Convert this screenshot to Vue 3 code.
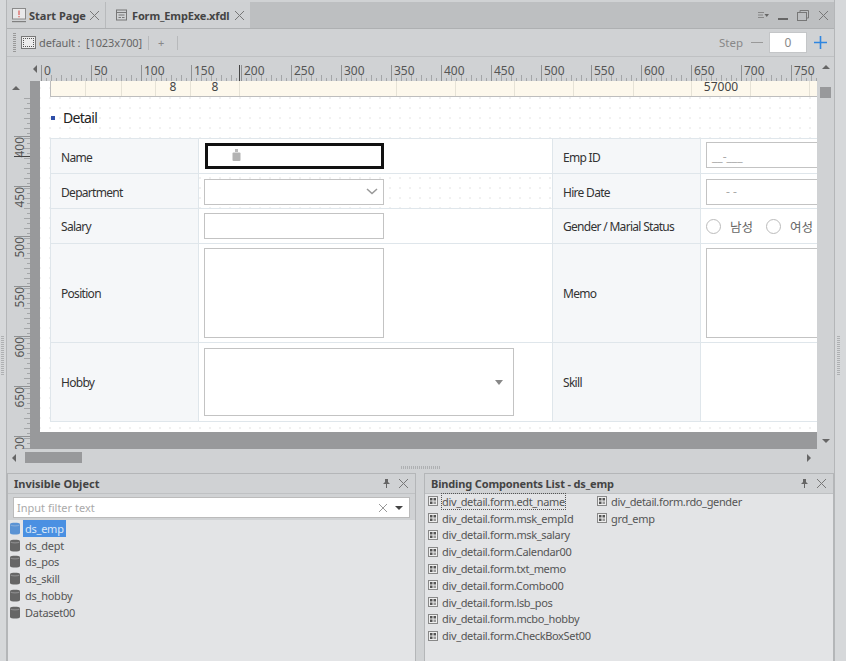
<script setup>
const topLabels = Array.from({ length: 16 }, (_, i) => i * 50)
const leftLabels = [400, 450, 500, 550, 600, 650, 700]

const bandCells = [
  '', '', '', '8', '8', '', '', '', '', '', '', '57000', '', '',
]

const datasets = ['ds_emp', 'ds_dept', 'ds_pos', 'ds_skill', 'ds_hobby', 'Dataset00']

const bindings = [
  'div_detail.form.edt_name',
  'div_detail.form.msk_empId',
  'div_detail.form.msk_salary',
  'div_detail.form.Calendar00',
  'div_detail.form.txt_memo',
  'div_detail.form.Combo00',
  'div_detail.form.lsb_pos',
  'div_detail.form.mcbo_hobby',
  'div_detail.form.CheckBoxSet00',
  'div_detail.form.rdo_gender',
  'grd_emp',
]
</script>

<template>
  <div class="ide">
    <div class="gutter gutter-left"><div class="grip-v"></div></div>

    <div class="main">
      <div class="tabbar">
        <div class="tab tab-start">
          <svg class="tab-icon" width="14" height="15" viewBox="0 0 14 15">
            <rect x="0.5" y="0.5" width="13" height="10.5" fill="#e9e9ea" stroke="#8a8a8a" />
            <rect x="6.4" y="2.5" width="1.2" height="4.5" fill="#dd5a55" />
            <rect x="6.4" y="8" width="1.2" height="1.3" fill="#dd5a55" />
            <rect x="0" y="13" width="14" height="1.2" fill="#808080" />
          </svg>
          <span class="tab-title">Start Page</span>
          <svg class="x-icon" width="11" height="11" viewBox="0 0 11 11"><path d="M1 1 10 10M10 1 1 10" /></svg>
        </div>
        <div class="tab tab-form">
          <svg class="tab-icon" width="11" height="12" viewBox="0 0 11 12">
            <rect x="0.5" y="1" width="10" height="10" fill="none" stroke="#777" />
            <path d="M0.5 3.5H10.5M2.5 6H8.5M2.5 8.5H5M6 8.5H8.5" stroke="#777" fill="none" />
          </svg>
          <span class="tab-title">Form_EmpExe.xfdl</span>
          <svg class="x-icon" width="11" height="11" viewBox="0 0 11 11"><path d="M1 1 10 10M10 1 1 10" /></svg>
        </div>
        <div class="win-actions">
          <svg width="11" height="7" viewBox="0 0 11 7">
            <path d="M0 .5H6M0 3H5M0 5.5H6" stroke="#888" fill="none" />
            <path d="M6.5 2H11L8.75 5Z" fill="#666" />
          </svg>
          <span class="win-min"></span>
          <svg width="12" height="11" viewBox="0 0 12 11">
            <path d="M3 2.5V.5H11.5V8H9.5" fill="none" stroke="#777" />
            <rect x="0.5" y="2.5" width="9" height="8" fill="none" stroke="#777" />
          </svg>
          <svg class="x-icon" width="11" height="11" viewBox="0 0 11 11"><path d="M1 1 10 10M10 1 1 10" /></svg>
        </div>
      </div>

      <div class="toolbar">
        <span class="grip-tool"></span>
        <span class="screen-icon"><span></span></span>
        <span class="screen-name">default :&nbsp; [1023x700]</span>
        <span class="tool-sep"></span>
        <span class="tool-plus">+</span>
        <span class="tool-sep"></span>
        <span class="step-label">Step</span>
        <span class="step-minus"></span>
        <span class="step-box">0</span>
        <svg class="step-plus" width="13" height="13" viewBox="0 0 13 13"><path d="M6.5 0V13M0 6.5H13" stroke="#2f86e0" stroke-width="1.6" fill="none" /></svg>
      </div>

      <div class="ruler-row">
        <div class="ruler-corner"><span class="tri-left"></span></div>
        <div class="ruler-top">
          <div v-for="n in topLabels" :key="n" class="ruler-cell">{{ n }}</div>
          <span class="ruler-mark"></span>
        </div>
        <div class="vscroll-head"><span class="tri-up"></span></div>
      </div>

      <div class="designer">
        <div class="ruler-left">
          <div class="ruler-arrow"><span class="tri-up"></span></div>
          <div class="ruler-left-track">
            <div v-for="n in leftLabels" :key="n" class="ruler-left-cell"><span>{{ n }}</span></div>
            <span class="ruler-left-mark"></span>
          </div>
        </div>

        <div class="stage">
          <div class="canvas">
            <div class="band">
              <div v-for="(text, i) in bandCells" :key="i" class="band-cell">{{ text }}</div>
            </div>

            <div class="section-title"><i></i>Detail</div>

            <div class="form-grid">
              <div class="th th-low">Name</div>
              <div class="td">
                <div class="field field-active">
                  <svg width="9" height="12" viewBox="0 0 9 12">
                    <rect x="3" y="0" width="3" height="3" fill="#bbb" />
                    <rect x="0.5" y="3.5" width="8" height="8.5" rx="1" fill="#b3b3b3" />
                  </svg>
                </div>
              </div>
              <div class="th th-low">Emp ID</div>
              <div class="td"><div class="field field-mask">__-___</div></div>

              <div class="th th-low">Department</div>
              <div class="td td-open">
                <div class="field field-combo">
                  <svg width="12" height="7" viewBox="0 0 12 7"><path d="M1 1 6 5.5 11 1" fill="none" stroke="#999" stroke-width="1.5" /></svg>
                </div>
              </div>
              <div class="th th-low">Hire Date</div>
              <div class="td"><div class="field field-date">- -</div></div>

              <div class="th">Salary</div>
              <div class="td"><div class="field"></div></div>
              <div class="th">Gender / Marial Status</div>
              <div class="td td-radio">
                <span class="radio"></span><span class="radio-text">남성</span>
                <span class="radio"></span><span class="radio-text">여성</span>
              </div>

              <div class="th">Position</div>
              <div class="td"><div class="field field-area"></div></div>
              <div class="th">Memo</div>
              <div class="td"><div class="field field-area"></div></div>

              <div class="th">Hobby</div>
              <div class="td">
                <div class="field field-hobby"><span class="tri-down"></span></div>
              </div>
              <div class="th">Skill</div>
              <div class="td"></div>
            </div>
          </div>
        </div>

        <div class="vscroll">
          <span class="vthumb"></span>
          <span class="tri-down small"></span>
        </div>
      </div>

      <div class="hscroll">
        <span class="tri-left"></span>
        <span class="hthumb"></span>
        <span class="tri-right"></span>
      </div>

      <div class="hsplit"><span class="grip-h"></span></div>

      <div class="panels">
        <section class="panel panel-left">
          <header class="panel-head">
            <span>Invisible Object</span>
            <svg class="pin" width="7" height="9" viewBox="0 0 7 9"><path d="M2 0H5V3L7 5H4V9H3V5H0L2 3Z" fill="#666" /></svg>
            <svg class="x-icon" width="11" height="11" viewBox="0 0 11 11"><path d="M1 1 10 10M10 1 1 10" /></svg>
          </header>
          <div class="filter-wrap">
            <div class="filter">
              <span class="filter-text">Input filter text</span>
              <svg class="x-icon light" width="10" height="10" viewBox="0 0 10 10"><path d="M1 1 9 9M9 1 1 9" /></svg>
              <span class="tri-down dark"></span>
            </div>
          </div>
          <ul class="ds-list">
            <li v-for="(name, i) in datasets" :key="name" class="ds-item" :class="{ selected: i === 0 }">
              <svg width="10" height="13" viewBox="0 0 10 13">
                <path d="M0 2C0 .2 10 .2 10 2V11C10 13 0 13 0 11Z" />
                <path d="M.5 3C2 4.2 8 4.2 9.5 3" fill="none" stroke="#e3e4e6" stroke-width=".6" opacity=".6" />
              </svg>
              <span class="ds-name">{{ name }}</span>
            </li>
          </ul>
        </section>

        <section class="panel panel-right">
          <header class="panel-head">
            <span class="bind-title">Binding Components List - ds_emp</span>
            <svg class="pin" width="7" height="9" viewBox="0 0 7 9"><path d="M2 0H5V3L7 5H4V9H3V5H0L2 3Z" fill="#666" /></svg>
            <svg class="x-icon" width="11" height="11" viewBox="0 0 11 11"><path d="M1 1 10 10M10 1 1 10" /></svg>
          </header>
          <ul class="bind-list">
            <li v-for="(name, i) in bindings" :key="name" class="bind-item">
              <svg width="10" height="10" viewBox="0 0 10 10">
                <rect x="0.5" y="0.5" width="9" height="9" fill="#eee" stroke="#888" />
                <rect x="2" y="2" width="2.5" height="2.5" fill="#555" />
                <rect x="5.5" y="2" width="2.5" height="2.5" fill="#555" />
                <rect x="2" y="5.5" width="2.5" height="2.5" fill="#555" />
                <rect x="5.5" y="5.5" width="2.5" height="2.5" fill="#999" />
              </svg>
              <span class="bind-name" :class="{ focused: i === 0 }">{{ name }}</span>
            </li>
          </ul>
        </section>
      </div>
    </div>

    <div class="gutter gutter-right">
      <div class="grip-v"></div>
    </div>
  </div>
</template>

<style>
html,
body {
  margin: 0;
  background: #d0d2d4;
}
</style>

<style scoped>
.ide {
  display: flex;
  width: 846px;
  height: 661px;
  overflow: hidden;
  background: #d0d2d4;
  font-family: "Noto Sans", "Noto Sans CJK KR", sans-serif;
  color: #444;
}

.gutter {
  flex: none;
  background: #d6d8da;
}

.gutter-left {
  border-right: 1px solid #b4b6b8;
  box-sizing: border-box;
  width: 7px;
}

.gutter-right {
  width: 12px;
  border-left: 1px solid #b4b6b8;
  box-sizing: border-box;
}

.grip-v {
  width: 3px;
  height: 40px;
  margin: 335px 0 0 1px;
  background: repeating-linear-gradient(0deg, #aeb0b2 0 1px, transparent 1px 2px);
}

.gutter-right .grip-v {
  margin-left: 2px;
}

.main {
  display: flex;
  flex-direction: column;
  width: 827px;
  flex: none;
}

/* tabs */
.tabbar {
  display: flex;
  align-items: stretch;
  height: 27px;
  margin-top: 2px;
  background: #bdbfc1;
  border-bottom: 1px solid #aeb0b2;
  box-sizing: border-box;
}

.tab {
  display: flex;
  align-items: center;
  background: #cfd1d3;
  font-size: 11px;
  font-weight: 700;
  color: #444;
}

.tab-start {
  width: 99px;
  padding-left: 5px;
  box-sizing: border-box;
  gap: 3px;
  border-right: 1px solid #b8babc;
}

.tab-form {
  width: 144px;
  padding-left: 10px;
  box-sizing: border-box;
  gap: 5px;
}

.tab-form .tab-title {
  letter-spacing: -0.15px;
}

.tab-title {
  white-space: nowrap;
}

.x-icon {
  flex: none;
}

.x-icon path {
  fill: none;
  stroke: #777;
  stroke-width: 1;
}

.x-icon.light path {
  stroke: #999;
}

.win-actions {
  display: flex;
  align-items: center;
  gap: 9px;
  margin-left: auto;
  padding-right: 5px;
}

.win-min {
  width: 10px;
  height: 2px;
  margin-top: 8px;
  background: #666;
}

/* toolbar */
.toolbar {
  display: flex;
  align-items: center;
  height: 28px;
  padding-left: 6px;
  font-size: 11px;
  color: #666;
  border-bottom: 1px solid #bfc1c3;
  box-sizing: border-box;
}

.grip-tool {
  width: 3px;
  height: 19px;
  background: repeating-linear-gradient(0deg, #999 0 1px, transparent 1px 2px);
}

.screen-icon {
  display: flex;
  width: 15px;
  height: 13px;
  margin-left: 5px;
  border: 1px solid #777;
  background: #ececec;
  box-sizing: border-box;
  padding: 1px;
}

.screen-icon span {
  flex: 1;
  border: 1px dotted #555;
}

.screen-name {
  margin-left: 3px;
  white-space: nowrap;
  letter-spacing: -0.1px;
}

.tool-sep {
  width: 1px;
  height: 14px;
  margin-left: 6px;
  background: #b7b9bb;
}

.tool-plus {
  margin-left: 9px;
  margin-right: 7px;
  color: #888;
}

.step-label {
  margin-left: auto;
  color: #888;
  font-size: 11.5px;
}

.step-minus {
  width: 12px;
  height: 1px;
  margin-left: 8px;
  background: #999;
}

.step-box {
  width: 38px;
  height: 21px;
  margin-left: 6px;
  background: #fff;
  border: 1px solid #c4c6c8;
  box-sizing: border-box;
  text-align: center;
  line-height: 19px;
  color: #888;
  font-size: 12px;
}

.step-plus {
  margin-left: 7px;
  margin-right: 7px;
}

/* rulers */
.ruler-row {
  display: flex;
  height: 24px;
}

.ruler-corner {
  position: relative;
  width: 33px;
  flex: none;
}

.ruler-corner .tri-left {
  position: absolute;
  left: 26px;
  top: 8px;
}

.ruler-top {
  position: relative;
  display: flex;
  align-items: flex-end;
  width: 777px;
  flex: none;
  padding-left: 1px;
  box-sizing: border-box;
  overflow: hidden;
  background:
    repeating-linear-gradient(90deg, #a4a6a8 0 1px, transparent 1px 5px) left 1px bottom 0 / 100% 3px no-repeat,
    repeating-linear-gradient(90deg, #a4a6a8 0 1px, transparent 1px 10px) left 1px bottom 0 / 100% 6px no-repeat;
}

.ruler-cell {
  flex: none;
  width: 50px;
  height: 16px;
  box-sizing: border-box;
  padding-left: 2px;
  border-left: 1px solid #8f9193;
  font-size: 12px;
  line-height: 12px;
  color: #555;
}

.ruler-mark {
  position: absolute;
  left: 199px;
  bottom: 0;
  width: 1px;
  height: 16px;
  background: #444;
}

.vscroll-head {
  display: flex;
  justify-content: center;
  flex: 1;
  padding-top: 8px;
}

.designer {
  display: flex;
  height: 368px;
}

.ruler-left {
  display: flex;
  flex-direction: column;
  width: 23px;
  flex: none;
}

.ruler-arrow {
  display: flex;
  justify-content: center;
  height: 16px;
  padding-top: 5px;
  padding-right: 6px;
  box-sizing: border-box;
}

.ruler-left-track {
  position: relative;
  flex: 1;
  padding-top: 39px;
  overflow: hidden;
  background:
    repeating-linear-gradient(0deg, #a4a6a8 0 1px, transparent 1px 5px) right 0 top 0 / 3px 100% no-repeat,
    repeating-linear-gradient(0deg, #a4a6a8 0 1px, transparent 1px 10px) right 0 top 0 / 6px 100% no-repeat;
}

.ruler-left-cell {
  height: 50px;
  width: 16px;
  margin-left: 7px;
  box-sizing: border-box;
  border-top: 1px solid #8f9193;
  overflow: visible;
}

.ruler-left-cell span {
  display: block;
  writing-mode: vertical-rl;
  transform: rotate(180deg);
  font-size: 12px;
  line-height: 11px;
  width: 11px;
  color: #555;
}

.ruler-left-mark {
  position: absolute;
  left: 7px;
  top: 59px;
  width: 16px;
  height: 1px;
  background: #444;
}

.stage {
  flex: none;
  padding: 0 0 17px 10px;
  background: #98999b;
}

.canvas {
  width: 777px;
  height: 351px;
  overflow: hidden;
  padding-left: 10px;
  box-sizing: border-box;
  background: radial-gradient(circle at 1px 1px, #cfcfcf 0.6px, transparent 0.75px) -1px 6px / 10px 10px #fff;
}

.band {
  display: grid;
  grid-template-columns: 35px 36px 34px 35px 49px 157px 59px 59px 59px 60px 58px 59px 59px 8px;
  height: 16px;
  border-left: 1px solid #bdbdbd;
  border-bottom: 1px solid #bdbdbd;
  box-sizing: border-box;
  background: #fdf8ec;
}

.band-cell {
  border-right: 1px solid #e6e2d6;
  font-size: 12px;
  line-height: 12px;
  text-align: center;
  color: #444;
  overflow: hidden;
}

.section-title {
  display: flex;
  align-items: center;
  height: 41px;
  font-size: 14px;
  letter-spacing: -0.7px;
  color: #222;
}

.section-title i {
  width: 4px;
  height: 4px;
  margin: 0 8px 0 1px;
  background: #2f4fa8;
}

.form-grid {
  display: grid;
  grid-template-columns: 148px 354px 148px 1fr;
  grid-template-rows: 35px 35px 35px 99px 79px;
  width: 767px;
  border-bottom: 1px solid #dfe6eb;
}

.th,
.td {
  display: flex;
  align-items: center;
  min-width: 0;
  overflow: hidden;
  border-top: 1px solid #dfe6eb;
  border-left: 1px solid #dfe6eb;
  box-sizing: border-box;
}

.th {
  padding-left: 10px;
  background: #f5f7f9;
  font-size: 12px;
  letter-spacing: -0.7px;
  color: #333;
  white-space: nowrap;
}

.th-low {
  padding-top: 2px;
}

.td {
  padding-left: 5px;
  background: #fff;
}

.td-open {
  background: transparent;
}

.field {
  position: relative;
  display: flex;
  align-items: center;
  flex: none;
  width: 180px;
  height: 26px;
  box-sizing: border-box;
  border: 1px solid #c3c3c3;
  background: #fff;
  font-size: 12px;
  color: #aaa;
}

.field-active {
  border: 3px solid #111;
  padding-left: 24px;
  margin-left: 1px;
  width: 179px;
}

.field-active svg {
  margin-top: -3px;
}

.field-mask {
  margin-top: -2px;
  padding-left: 5px;
  align-items: flex-end;
  line-height: 20px;
}

.field-date {
  margin-top: 1px;
  padding-left: 19px;
}

.field-combo {
  margin-top: 1px;
  justify-content: flex-end;
  padding-right: 5px;
}

.field-area {
  height: 90px;
}

.field-hobby {
  width: 310px;
  height: 68px;
  justify-content: flex-end;
  padding-right: 10px;
}

.td-radio {
  font-size: 12.5px;
  color: #666;
}

.radio {
  width: 15px;
  height: 15px;
  border: 1px solid #bbb;
  border-radius: 50%;
  box-sizing: border-box;
  background: #fff;
  flex: none;
}

.radio-text {
  margin: 0 13px 0 9px;
  white-space: nowrap;
}

/* shapes */
.tri-up,
.tri-down,
.tri-left,
.tri-right {
  display: block;
  width: 0;
  height: 0;
  flex: none;
}

.tri-up {
  border: 4px solid transparent;
  border-top: 0;
  border-bottom: 4px solid #666;
}

.tri-down {
  border: 4px solid transparent;
  border-bottom: 0;
  border-top: 5px solid #888;
}

.tri-down.small {
  border-top: 4px solid #666;
}

.tri-down.dark {
  border-top: 4px solid #444;
}

.tri-left {
  border: 4px solid transparent;
  border-left: 0;
  border-right: 4px solid #666;
}

.tri-right {
  border: 4px solid transparent;
  border-right: 0;
  border-left: 4px solid #666;
}

.vscroll {
  display: flex;
  flex-direction: column;
  align-items: center;
  flex: 1;
  padding-top: 6px;
  box-sizing: border-box;
}

.vthumb {
  width: 11px;
  height: 11px;
  background: #98999b;
}

.vscroll .tri-down {
  margin-top: 341px;
}

.hscroll {
  display: flex;
  align-items: center;
  height: 17px;
  padding-left: 5px;
  box-sizing: border-box;
}

.hthumb {
  width: 57px;
  height: 11px;
  margin-left: 9px;
  background: #98999b;
}

.hscroll .tri-right {
  margin-left: auto;
  margin-right: 23px;
}

.hsplit {
  display: flex;
  justify-content: flex-end;
  height: 7px;
  padding-right: 393px;
}

.grip-h {
  width: 40px;
  height: 3px;
  background: repeating-linear-gradient(90deg, #aeb0b2 0 1px, transparent 1px 2px);
}

/* bottom panels */
.panels {
  display: flex;
  flex: 1;
  min-height: 0;
}

.panel {
  display: flex;
  flex-direction: column;
  border: 1px solid #b4b6b8;
  border-bottom: 0;
  box-sizing: border-box;
  background: #e3e4e6;
}

.panel-left {
  width: 409px;
}

.panel-right {
  width: 410px;
  margin-left: 8px;
}

.panel-head {
  display: flex;
  align-items: center;
  flex: none;
  height: 20px;
  padding: 0 6px;
  background: #d0d2d4;
  border-bottom: 1px solid #bfc1c3;
  font-size: 11px;
  font-weight: 700;
  color: #444;
  box-sizing: border-box;
}

.bind-title {
  letter-spacing: -0.15px;
}

.panel-head .pin {
  margin-left: auto;
  margin-right: 8px;
}

.filter-wrap {
  flex: none;
  padding: 3px 5px 2px;
  background: #d0d2d4;
}

.filter {
  display: flex;
  align-items: center;
  height: 21px;
  padding: 0 6px 0 3px;
  background: #fff;
  border: 1px solid #bbb;
  box-sizing: border-box;
}

.filter-text {
  flex: 1;
  font-size: 11px;
  color: #aaa;
}

.filter .tri-down {
  margin-left: 7px;
}

.ds-list,
.bind-list {
  margin: 0;
  padding: 0;
  list-style: none;
}

.ds-list {
  padding-left: 2px;
}

.ds-item {
  display: flex;
  align-items: center;
  height: 16.8px;
  gap: 4px;
  font-size: 11px;
  letter-spacing: -0.25px;
  color: #555;
}

.ds-item svg {
  flex: none;
  fill: #666;
}

.ds-name {
  padding: 0 1px;
}

.ds-item.selected svg {
  fill: #5b93d4;
}

.ds-item.selected .ds-name {
  padding: 1px 2px;
  margin-left: -1px;
  background: #4a90e2;
  color: #dbe8f8;
}

.bind-list {
  display: grid;
  grid-auto-flow: column;
  grid-template-rows: repeat(9, 16.8px);
  grid-template-columns: 169px 1fr;
  margin-top: -1px;
  padding-left: 3px;
}

.bind-item {
  display: flex;
  align-items: center;
  gap: 4px;
  font-size: 11px;
  letter-spacing: -0.35px;
  color: #555;
  white-space: nowrap;
}

.bind-item svg {
  flex: none;
}

.bind-name.focused {
  outline: 1px dotted #555;
  outline-offset: 0;
}
</style>
